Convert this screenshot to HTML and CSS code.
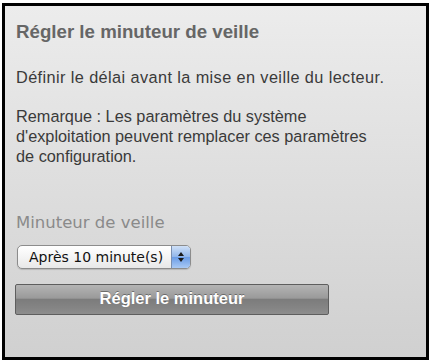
FILE: index.html
```html
<!DOCTYPE html>
<html lang="fr">
<head>
<meta charset="utf-8">
<link rel="stylesheet" href="styles.css">
</head>
<body>
<div class="panel">
  <h1 class="title">Régler le minuteur de veille</h1>
  <p class="text lead">Définir le délai avant la mise en veille du lecteur.</p>
  <p class="text note">Remarque : Les paramètres du système<br>d'exploitation peuvent remplacer ces paramètres<br>de configuration.</p>
  <div class="label">Minuteur de veille</div>
  <div class="select">
    <span class="select-text">Après 10 minute(s)</span>
    <span class="select-arrows">
      <svg width="8" height="12" viewBox="0 0 8 12"><path d="M4 1 L7 5 L1 5 Z" fill="#1a1a1a"/><path d="M4 11 L7 7 L1 7 Z" fill="#1a1a1a"/></svg>
    </span>
  </div>
  <div class="button">Régler le minuteur</div>
</div>
</body>
</html>
```
FILE: styles.css
```css
html, body {
  margin: 0;
  padding: 0;
  background: #ffffff;
}
body {
  padding: 3px 0 0 2px;
}
.panel {
  box-sizing: border-box;
  width: 427px;
  height: 357px;
  border: 3px solid #000;
  background: linear-gradient(to bottom, #ececec 0%, #dedede 50%, #d0d0d0 100%);
  padding: 15px 11px 0 11px;
  font-family: "Liberation Sans", Arial, sans-serif;
}
.title {
  margin: 0;
  font-size: 18.7px;
  line-height: 22px;
  font-weight: bold;
  color: #666666;
}
.text {
  margin: 0;
  font-size: 16.3px;
  line-height: 20px;
  color: #3a3a3a;
}
.lead {
  margin-top: 24px;
  letter-spacing: 0.4px;
}
.note {
  margin-top: 19px;
}
.label {
  margin-top: 47px;
  font-family: "DejaVu Sans", sans-serif;
  font-size: 16.5px;
  line-height: 20px;
  color: #8a8a8a;
}
.select {
  margin-top: 12px;
  margin-left: 1px;
  box-sizing: border-box;
  width: 174px;
  height: 24px;
  border: 1px solid #8c8c8c;
  border-radius: 5px;
  display: flex;
  overflow: hidden;
  background: linear-gradient(to bottom, #ffffff 0%, #f4f4f4 50%, #e8e8e8 100%);
  box-shadow: 0 1px 1px rgba(0,0,0,0.15);
}
.select-text {
  flex: 1;
  padding-left: 11px;
  font-family: "DejaVu Sans", sans-serif;
  font-size: 14px;
  line-height: 22px;
  color: #111;
}
.select-arrows {
  width: 18px;
  border-left: 1px solid #7a8fb0;
  background: linear-gradient(to bottom, #cfe0f7 0%, #8fb5ea 50%, #6a9ce6 51%, #a9c9f4 100%);
  display: flex;
  align-items: center;
  justify-content: center;
}
.select-arrows svg {
  display: block;
}
.button {
  margin-top: 15px;
  margin-left: -1px;
  box-sizing: border-box;
  width: 314px;
  height: 31px;
  border: 1px solid #5e5e5e;
  border-radius: 2px;
  background: linear-gradient(to bottom, #b4b4b4 0%, #9a9a9a 45%, #7c7c7c 50%, #858585 80%, #8e8e8e 100%);
  color: #ffffff;
  font-weight: bold;
  font-size: 16.5px;
  line-height: 27px;
  text-align: center;
  text-shadow: 0 -1px 0 rgba(0,0,0,0.35);
}
```
